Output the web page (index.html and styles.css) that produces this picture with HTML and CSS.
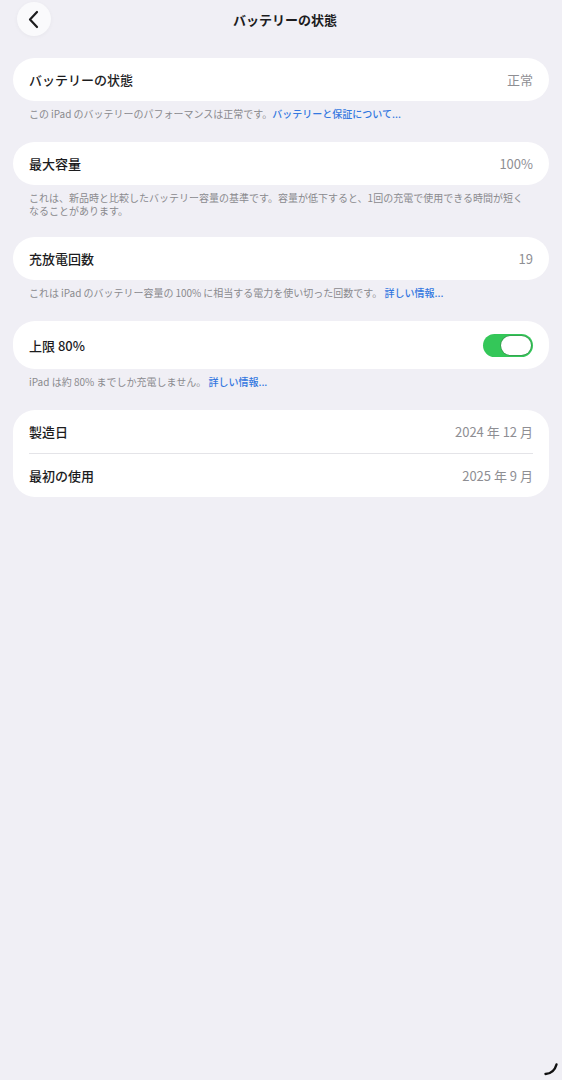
FILE: index.html
```html
<!DOCTYPE html>
<html lang="ja">
<head>
    <meta charset="UTF-8">
    <title>バッテリーの状態</title>
    <link rel="stylesheet" href="styles.css">
</head>
<body>

<div class="header">
    <button class="back-button" aria-label="戻る">
        <svg width="34" height="34" viewBox="0 0 34 34">
            <path d="M20 10 L13 17.5 L20 25" fill="none" stroke="#1c1c1e" stroke-width="2.2" stroke-linecap="round" stroke-linejoin="round"/>
        </svg>
    </button>
    <div class="title">バッテリーの状態</div>
    <div></div>
</div>

<div class="content">
    <div class="group">
        <div class="card">
            <div class="row">
                <span class="label">バッテリーの状態</span>
                <span class="value">正常</span>
            </div>
        </div>
        <div class="footer">この&thinsp;iPad&thinsp;のバッテリーのパフォーマンスは正常です。<a href="#">バッテリーと保証について...</a></div>
    </div>

    <div class="group group-tight">
        <div class="card">
            <div class="row">
                <span class="label">最大容量</span>
                <span class="value">100%</span>
            </div>
        </div>
        <div class="footer">これは、新品時と比較したバッテリー容量の基準です。容量が低下すると、1回の充電で使用できる時間が短く<br>なることがあります。</div>
    </div>

    <div class="group">
        <div class="card">
            <div class="row">
                <span class="label">充放電回数</span>
                <span class="value">19</span>
            </div>
        </div>
        <div class="footer">これは&thinsp;iPad&thinsp;のバッテリー容量の&thinsp;100%&thinsp;に相当する電力を使い切った回数です。 <a href="#">詳しい情報...</a></div>
    </div>

    <div class="group">
        <div class="card">
            <div class="row row-toggle">
                <span class="label">上限 80%</span>
                <span class="toggle on"><span class="knob"></span></span>
            </div>
        </div>
        <div class="footer">iPad は約 80% までしか充電しません。 <a href="#">詳しい情報...</a></div>
    </div>

    <div class="group">
        <div class="card">
            <div class="row">
                <span class="label">製造日</span>
                <span class="value">2024 年 12 月</span>
            </div>
            <div class="divider"></div>
            <div class="row">
                <span class="label">最初の使用</span>
                <span class="value">2025 年 9 月</span>
            </div>
        </div>
    </div>
</div>

<svg class="screen-corner" width="16" height="14" viewBox="0 0 16 14">
    <path d="M2.5 12 Q11 11.5 13.5 2.5" fill="none" stroke="#111" stroke-width="2.4" stroke-linecap="round"/>
</svg>

</body>
</html>
```

FILE: styles.css
```css
body {
    font-family: "Noto Sans CJK JP", "Noto Sans", sans-serif;
    background-color: #f0eff5;
    color: #1c1c1e;
    margin: 0;
    padding: 0;
    min-height: 1080px;
    position: relative;
}

.header {
    display: grid;
    grid-template-columns: 1fr auto 1fr;
    align-items: center;
    padding: 2px 9px 0 17px;
    height: 34px;
}

.back-button {
    width: 34px;
    height: 34px;
    padding: 0;
    border: none;
    border-radius: 50%;
    background: #fafafc;
    box-shadow: 0 1px 4px rgba(0, 0, 0, 0.04);
    display: flex;
}

.title {
    font-size: 13px;
    font-weight: 700;
}

.content {
    padding: 22px 13px 0 13px;
}

.group {
    margin-bottom: 22px;
}

.group-tight {
    margin-bottom: 20px;
}

.card {
    background: white;
    border-radius: 22px;
    padding: 0 16px;
}

.row {
    display: flex;
    justify-content: space-between;
    align-items: center;
    height: 43px;
}

.row-toggle {
    height: 48px;
}

.label {
    font-size: 13px;
    font-weight: 500;
}

.value {
    font-size: 13px;
    color: #8e8e93;
}

.divider {
    height: 1px;
    background: #e4e4e8;
}

.footer {
    padding: 6px 16px 0 16px;
    font-size: 10px;
    line-height: 13px;
    color: #8a8a8e;
    white-space: nowrap;
}

.footer a {
    color: #3478e0;
    text-decoration: none;
    font-weight: 500;
}

.toggle {
    width: 50px;
    height: 23px;
    border-radius: 12px;
    background: #34c759;
    display: flex;
    align-items: center;
    justify-content: flex-end;
    padding: 0 2px;
    box-sizing: border-box;
}

.knob {
    width: 30px;
    height: 19px;
    border-radius: 10px;
    background: white;
    box-shadow: 0 0 0 0.8px rgba(60, 110, 70, 0.5);
}

.screen-corner {
    position: absolute;
    left: 543px;
    top: 1062px;
}
```
